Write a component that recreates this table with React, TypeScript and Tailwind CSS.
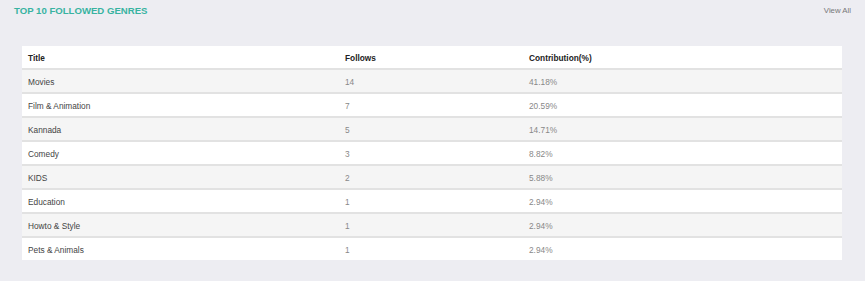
import React from "react";

const rows = [
  ["Movies", "14", "41.18%"],
  ["Film & Animation", "7", "20.59%"],
  ["Kannada", "5", "14.71%"],
  ["Comedy", "3", "8.82%"],
  ["KIDS", "2", "5.88%"],
  ["Education", "1", "2.94%"],
  ["Howto & Style", "1", "2.94%"],
  ["Pets & Animals", "1", "2.94%"],
];

export default function App() {
  return (
    <div className="w-full h-[281px] bg-[#ededf2] font-['Liberation_Sans',Arial,sans-serif] pt-[5px]">
      <div className="flex items-center justify-between pl-[14px] pr-[14px] h-[12px]">
        <div className="text-[9.6px] font-bold text-[#38b3a1] leading-none">TOP 10 FOLLOWED GENRES</div>
        <div className="text-[7.8px] text-[#777] leading-none">View All</div>
      </div>
      <div className="mt-[29px] ml-[22px] mr-[23px] bg-white">
        <div className="grid grid-cols-[323px_184px_1fr] h-[24px] pt-[3px] items-center border-b-2 border-[#e2e2e2] text-[8.3px] font-bold text-[#222]">
          <div className="pl-[6px]">Title</div>
          <div>Follows</div>
          <div>Contribution(%)</div>
        </div>
        {rows.map((r, i) => (
          <div
            key={i}
            className={
              "grid grid-cols-[323px_184px_1fr] items-center pt-[3px] text-[8.3px] " +
              (i % 2 === 0 ? "bg-[#f5f5f5] " : "bg-white ") +
              (i < rows.length - 1 ? "h-[24px] border-b-2 border-[#e2e2e2]" : "h-[22px]")
            }
          >
            <div className="pl-[6px] text-[#444]">{r[0]}</div>
            <div className="text-[#888]">{r[1]}</div>
            <div className="text-[#888]">{r[2]}</div>
          </div>
        ))}
      </div>
    </div>
  );
}
